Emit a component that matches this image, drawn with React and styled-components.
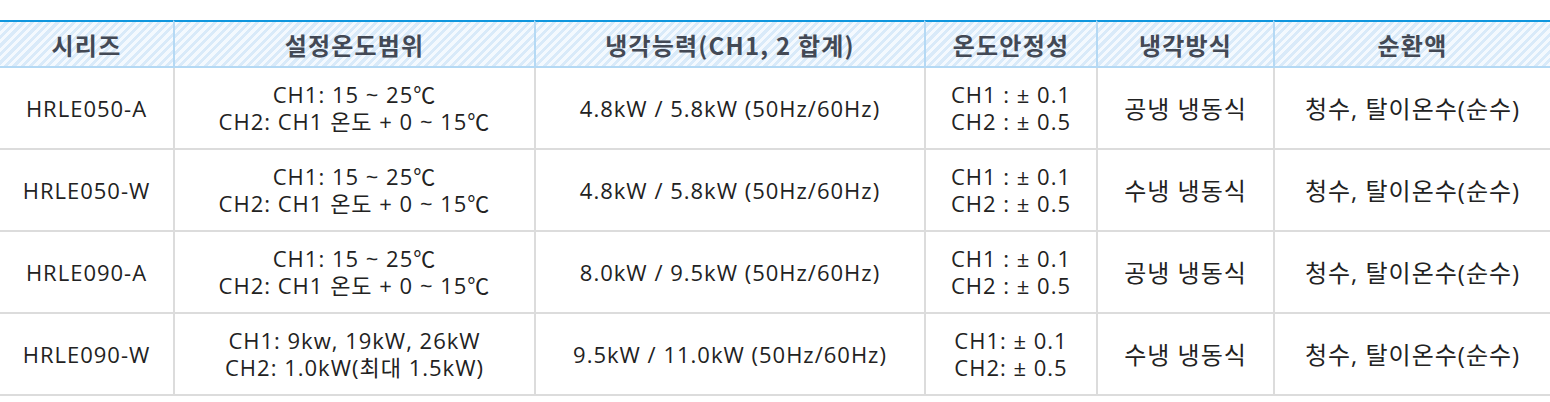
import React from "react";
import styled, { createGlobalStyle } from "styled-components";

const GlobalStyle = createGlobalStyle`
  body {
    margin: 0;
    background: #fff;
    font-family: "Open Sans", "Noto Sans CJK KR", sans-serif;
  }
`;

const columns = [173, 361, 390, 172, 177, 277];

const headers = ["시리즈", "설정온도범위", "냉각능력(CH1, 2 합계)", "온도안정성", "냉각방식", "순환액"];

const rows = [
  {
    model: "HRLE050-A",
    range: ["CH1: 15 ~ 25℃", "CH2: CH1 온도 + 0 ~ 15℃"],
    capacity: "4.8kW / 5.8kW (50Hz/60Hz)",
    stability: ["CH1 : ± 0.1", "CH2 : ± 0.5"],
    cooling: "공냉 냉동식",
    fluid: "청수, 탈이온수(순수)",
  },
  {
    model: "HRLE050-W",
    range: ["CH1: 15 ~ 25℃", "CH2: CH1 온도 + 0 ~ 15℃"],
    capacity: "4.8kW / 5.8kW (50Hz/60Hz)",
    stability: ["CH1 : ± 0.1", "CH2 : ± 0.5"],
    cooling: "수냉 냉동식",
    fluid: "청수, 탈이온수(순수)",
  },
  {
    model: "HRLE090-A",
    range: ["CH1: 15 ~ 25℃", "CH2: CH1 온도 + 0 ~ 15℃"],
    capacity: "8.0kW / 9.5kW (50Hz/60Hz)",
    stability: ["CH1 : ± 0.1", "CH2 : ± 0.5"],
    cooling: "공냉 냉동식",
    fluid: "청수, 탈이온수(순수)",
  },
  {
    model: "HRLE090-W",
    range: ["CH1: 9kw, 19kW, 26kW", "CH2: 1.0kW(최대 1.5kW)"],
    capacity: "9.5kW / 11.0kW (50Hz/60Hz)",
    stability: ["CH1: ± 0.1", "CH2: ± 0.5"],
    cooling: "수냉 냉동식",
    fluid: "청수, 탈이온수(순수)",
  },
];

const Wrap = styled.div`
  padding-top: 20px;
`;

const Table = styled.table`
  width: 1550px;
  table-layout: fixed;
  border-collapse: separate;
  border-spacing: 0;
`;

const HeadCell = styled.th`
  height: 44px;
  padding: 0;
  border-top: 2px solid #0f96de;
  border-bottom: 2px solid #b5d9f4;
  border-left: ${(p) => (p.$first ? "none" : "2px solid #b5d9f4")};
  background: repeating-linear-gradient(
    -45deg,
    #f4f9fe 0px,
    #f4f9fe 3px,
    #d9eaf9 3px,
    #d9eaf9 6px
  );
  color: #434955;
  font-family: "Noto Sans CJK KR", "Open Sans", sans-serif;
  font-size: 24px;
  letter-spacing: 1.2px;
  font-weight: 700;
  text-align: center;
  vertical-align: middle;
  white-space: nowrap;
`;

const Cell = styled.td`
  height: 80px;
  padding: 0;
  border-bottom: 2px solid #dcdcdc;
  border-left: ${(p) => (p.$first ? "none" : "2px solid #dcdcdc")};
  color: #222;
  font-size: ${(p) => (p.$hangul ? "24px" : "22px")};
  letter-spacing: 1px;
  line-height: 27px;
  text-align: center;
  vertical-align: middle;
  white-space: nowrap;
`;

const Line = styled.div`
  display: block;
`;

const Lines = ({ items }) => items.map((t) => <Line key={t}>{t}</Line>);

export default function App() {
  return (
    <Wrap>
      <GlobalStyle />
      <Table>
        <colgroup>
          {columns.map((w, i) => (
            <col key={i} style={{ width: w }} />
          ))}
        </colgroup>
        <thead>
          <tr>
            {headers.map((h, i) => (
              <HeadCell key={h} $first={i === 0}>
                {h}
              </HeadCell>
            ))}
          </tr>
        </thead>
        <tbody>
          {rows.map((r) => (
            <tr key={r.model}>
              <Cell $first>{r.model}</Cell>
              <Cell>
                <Lines items={r.range} />
              </Cell>
              <Cell>{r.capacity}</Cell>
              <Cell>
                <Lines items={r.stability} />
              </Cell>
              <Cell $hangul>{r.cooling}</Cell>
              <Cell $hangul>{r.fluid}</Cell>
            </tr>
          ))}
        </tbody>
      </Table>
    </Wrap>
  );
}
